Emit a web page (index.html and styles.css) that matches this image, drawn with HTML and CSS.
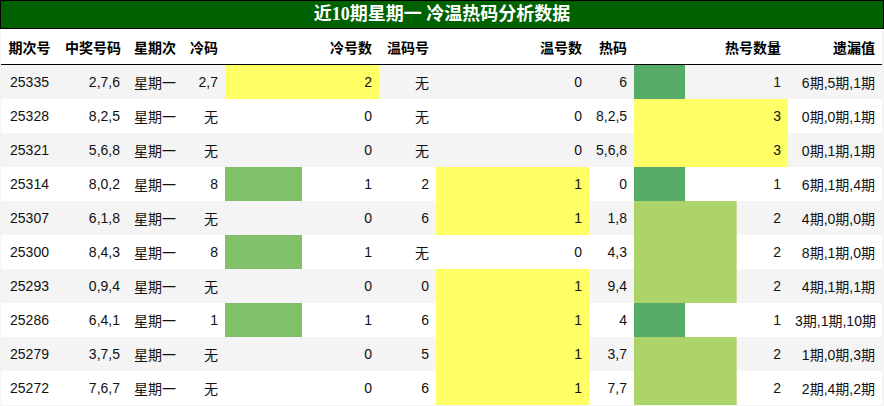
FILE: index.html
```html
<!DOCTYPE html>
<html lang="zh">
<head>
<meta charset="utf-8">
<title>近10期星期一 冷温热码分析数据</title>
<link rel="stylesheet" href="styles.css">
</head>
<body>
<div class="page">
  <div class="title">近10期星期一 冷温热码分析数据</div>
  <table class="data">
    <colgroup>
      <col class="c1"><col class="c2"><col class="c3"><col class="c4"><col class="c5">
      <col class="c6"><col class="c7"><col class="c8"><col class="c9"><col class="c10">
    </colgroup>
    <thead>
      <tr>
        <th class="ctr">期次号</th><th>中奖号码</th><th class="lft">星期次</th><th>冷码</th><th>冷号数</th>
        <th>温码号</th><th>温号数</th><th>热码</th><th>热号数量</th><th>遗漏值</th>
      </tr>
    </thead>
    <tbody>
      <tr><td class="ctr">25335</td><td>2,7,6</td><td class="lft">星期一</td><td>2,7</td><td class="bar yellow" style="background-size:100% 100%">2</td><td>无</td><td class="bar">0</td><td>6</td><td class="bar green1" style="background-size:33.33% 100%">1</td><td>6期,5期,1期</td></tr>
      <tr><td class="ctr">25328</td><td>8,2,5</td><td class="lft">星期一</td><td>无</td><td class="bar">0</td><td>无</td><td class="bar">0</td><td>8,2,5</td><td class="bar yellow" style="background-size:100% 100%">3</td><td>0期,0期,1期</td></tr>
      <tr><td class="ctr">25321</td><td>5,6,8</td><td class="lft">星期一</td><td>无</td><td class="bar">0</td><td>无</td><td class="bar">0</td><td>5,6,8</td><td class="bar yellow" style="background-size:100% 100%">3</td><td>0期,1期,1期</td></tr>
      <tr><td class="ctr">25314</td><td>8,0,2</td><td class="lft">星期一</td><td>8</td><td class="bar cold1" style="background-size:50% 100%">1</td><td>2</td><td class="bar yellow" style="background-size:100% 100%">1</td><td>0</td><td class="bar green1" style="background-size:33.33% 100%">1</td><td>6期,1期,4期</td></tr>
      <tr><td class="ctr">25307</td><td>6,1,8</td><td class="lft">星期一</td><td>无</td><td class="bar">0</td><td>6</td><td class="bar yellow" style="background-size:100% 100%">1</td><td>1,8</td><td class="bar green2" style="background-size:66.67% 100%">2</td><td>4期,0期,0期</td></tr>
      <tr><td class="ctr">25300</td><td>8,4,3</td><td class="lft">星期一</td><td>8</td><td class="bar cold1" style="background-size:50% 100%">1</td><td>无</td><td class="bar">0</td><td>4,3</td><td class="bar green2" style="background-size:66.67% 100%">2</td><td>8期,1期,0期</td></tr>
      <tr><td class="ctr">25293</td><td>0,9,4</td><td class="lft">星期一</td><td>无</td><td class="bar">0</td><td>0</td><td class="bar yellow" style="background-size:100% 100%">1</td><td>9,4</td><td class="bar green2" style="background-size:66.67% 100%">2</td><td>4期,1期,1期</td></tr>
      <tr><td class="ctr">25286</td><td>6,4,1</td><td class="lft">星期一</td><td>1</td><td class="bar cold1" style="background-size:50% 100%">1</td><td>6</td><td class="bar yellow" style="background-size:100% 100%">1</td><td>4</td><td class="bar green1" style="background-size:33.33% 100%">1</td><td>3期,1期,10期</td></tr>
      <tr><td class="ctr">25279</td><td>3,7,5</td><td class="lft">星期一</td><td>无</td><td class="bar">0</td><td>5</td><td class="bar yellow" style="background-size:100% 100%">1</td><td>3,7</td><td class="bar green2" style="background-size:66.67% 100%">2</td><td>1期,0期,3期</td></tr>
      <tr><td class="ctr">25272</td><td>7,6,7</td><td class="lft">星期一</td><td>无</td><td class="bar">0</td><td>6</td><td class="bar yellow" style="background-size:100% 100%">1</td><td>7,7</td><td class="bar green2" style="background-size:66.67% 100%">2</td><td>2期,4期,2期</td></tr>
    </tbody>
  </table>
</div>
</body>
</html>
```
FILE: styles.css
```css
html, body {
  margin: 0;
  padding: 0;
  background: #f4f4f4;
}

.page {
  width: 884px;
  font-family: "Liberation Sans", "Noto Sans CJK SC", sans-serif;
  color: #111;
}

.title {
  height: 27px;
  line-height: 27px;
  border: 1px solid #000;
  background: #006100;
  color: #fff;
  text-align: center;
  font-family: "Liberation Serif", "Noto Sans CJK SC", serif;
  font-weight: bold;
  font-size: 18px;
}

.data {
  margin: 0 1px;
  width: 881px;
  border-collapse: collapse;
  table-layout: fixed;
  font-size: 14px;
}

.c1 { width: 57px; }
.c2 { width: 69px; }
.c3 { width: 56px; }
.c4 { width: 42px; }
.c5 { width: 154px; }
.c6 { width: 57px; }
.c7 { width: 153px; }
.c8 { width: 45px; }
.c9 { width: 154px; }
.c10 { width: 94px; }

.data th,
.data td {
  padding: 0 7px;
  text-align: right;
  white-space: nowrap;
  overflow: visible;
}

.data th {
  height: 35px;
  background: #fff;
  font-weight: bold;
  border-bottom: 1px solid #000;
  color: #000;
}

.data td {
  height: 34px;
}

.data .ctr { text-align: center; }
.data .lft { text-align: left; }

.data tbody tr:nth-child(odd) { background: #f4f4f4; }
.data tbody tr:nth-child(even) { background: #fff; }

.bar {
  background-repeat: no-repeat;
  background-position: left top;
}

.bar.yellow { background-image: linear-gradient(#ffff66, #ffff66); }
.bar.green1 { background-image: linear-gradient(#57ab68, #57ab68); }
.bar.green2 { background-image: linear-gradient(#acd468, #acd468); }
.bar.cold1 { background-image: linear-gradient(#80c068, #80c068); }
```
